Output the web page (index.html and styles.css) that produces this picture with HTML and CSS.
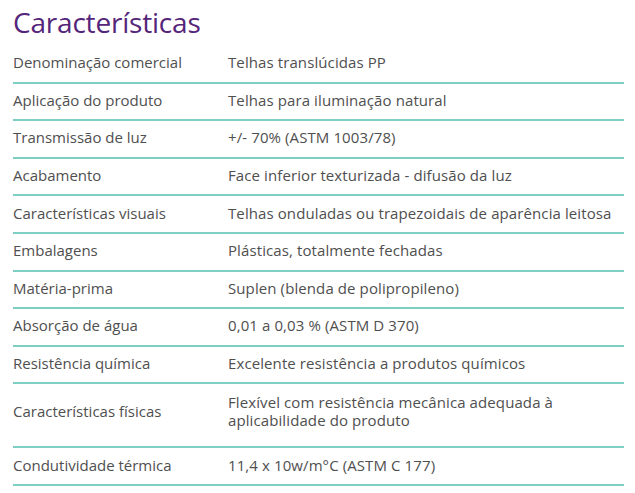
FILE: index.html
```html
<!DOCTYPE html>
<html lang="pt">
<head>
<meta charset="utf-8">
<link rel="stylesheet" href="styles.css">
</head>
<body>
<div class="page">
  <h1 class="title">Características</h1>
  <div class="specs">
    <div class="row"><div class="k">Denominação comercial</div><div class="v">Telhas translúcidas PP</div></div>
    <div class="row"><div class="k">Aplicação do produto</div><div class="v">Telhas para iluminação natural</div></div>
    <div class="row"><div class="k">Transmissão de luz</div><div class="v">+/- 70% (ASTM 1003/78)</div></div>
    <div class="row"><div class="k">Acabamento</div><div class="v">Face inferior texturizada - difusão da luz</div></div>
    <div class="row"><div class="k">Características visuais</div><div class="v">Telhas onduladas ou trapezoidais de aparência leitosa</div></div>
    <div class="row"><div class="k">Embalagens</div><div class="v">Plásticas, totalmente fechadas</div></div>
    <div class="row"><div class="k">Matéria-prima</div><div class="v">Suplen (blenda de polipropileno)</div></div>
    <div class="row"><div class="k">Absorção de água</div><div class="v">0,01 a 0,03 % (ASTM D 370)</div></div>
    <div class="row"><div class="k">Resistência química</div><div class="v">Excelente resistência a produtos químicos</div></div>
    <div class="row tall"><div class="k">Características físicas</div><div class="v"><span class="ln">Flexível com resistência mecânica adequada à</span><span class="ln">aplicabilidade do produto</span></div></div>
    <div class="row"><div class="k">Condutividade térmica</div><div class="v">11,4 x 10w/m°C (ASTM C 177)</div></div>
  </div>
</div>
</body>
</html>
```
FILE: styles.css
```css
html, body {
  margin: 0;
  padding: 0;
  background: #ffffff;
}
.page {
  width: 611px;
  padding: 0 0 0 13px;
  font-family: "Open Sans", "Noto Sans", sans-serif;
  color: #4f4f4f;
}
.title {
  margin: 0;
  height: 46px;
  font-size: 28px;
  font-weight: 400;
  line-height: 44px;
  color: #55257a;
  letter-spacing: -0.2px;
}
.specs {
  display: flex;
  flex-direction: column;
}
.row {
  display: grid;
  grid-template-columns: 215px 1fr;
  align-items: center;
  box-sizing: border-box;
  height: 37.6px;
  padding-bottom: 2px;
  border-bottom: 2px solid #7dcfc4;
  font-size: 15px;
  line-height: 17px;
}
.row.tall {
  height: 64px;
  padding-bottom: 8px;
}
.k, .v {
  white-space: nowrap;
}
.v {
  letter-spacing: 0.1px;
}
.ln {
  display: block;
  line-height: 18px;
}
```
